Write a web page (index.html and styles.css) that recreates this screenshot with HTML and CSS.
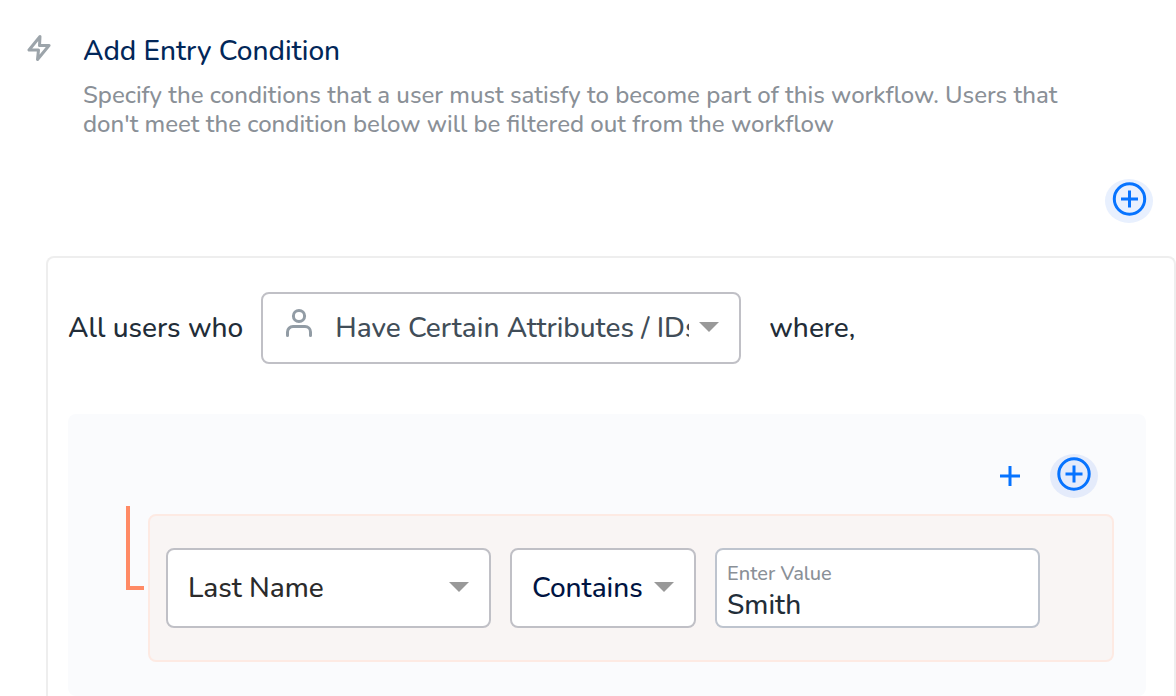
FILE: index.html
```html
<!DOCTYPE html>
<html lang="en">
<head>
<meta charset="utf-8">
<meta name="viewport" content="width=device-width, initial-scale=1">
<title>Add Entry Condition</title>
<link rel="stylesheet" href="styles.css">
</head>
<body>
<main class="page">
  <header class="intro">
    <svg class="intro-icon" viewBox="0 0 24 28" aria-hidden="true"><path d="M13 2.500 2 16h9.500l-1 9.500L22 11.500h-9.500z"/></svg>
    <div class="intro-text">
      <h1 class="title">Add Entry Condition</h1>
      <p class="description">Specify the conditions that a user must satisfy to become part of this workflow. Users that don't meet the condition below will be filtered out from the workflow</p>
    </div>
  </header>

  <div class="page-actions">
    <button class="round-button" type="button" aria-label="Add condition group">
      <svg class="round-icon" viewBox="0 0 48 44" aria-hidden="true"><circle cx="24.500" cy="20" r="15.200"/><path d="M16 20h17M24.500 11.500v17"/></svg>
    </button>
  </div>

  <section class="panel">
    <div class="audience">
      <label class="phrase" for="audience">All users who</label>
      <div class="select-box audience-box">
        <svg class="user-icon" viewBox="0 0 28 30" aria-hidden="true"><circle cx="14" cy="8" r="5.600"/><path d="M2.500 27.500v-3.500a5.500 5.500 0 0 1 5.500-5.500h12a5.500 5.500 0 0 1 5.500 5.500v3.500"/></svg>
        <select class="select audience-select" id="audience"><option>Have Certain Attributes / IDs</option></select>
        <svg class="caret" viewBox="0 0 20 10" aria-hidden="true"><path d="M0 0h20L10 10z"/></svg>
      </div>
      <span class="phrase">where,</span>
    </div>

    <div class="group">
      <div class="group-actions">
        <button class="plain-button" type="button" aria-label="Add rule">
          <svg class="plus-icon" viewBox="0 0 20 20" aria-hidden="true"><path d="M0 10h20M10 0v20"/></svg>
        </button>
        <button class="round-button tinted" type="button" aria-label="Add nested group">
          <svg class="round-icon" viewBox="0 0 48 44" aria-hidden="true"><circle cx="24" cy="20" r="15.200"/><path d="M15.500 20h17M24 11.500v17"/></svg>
        </button>
      </div>
      <div class="rule-row">
        <div class="connector"></div>
        <div class="rule">
          <div class="select-box attribute-box">
            <select class="select attribute-select" aria-label="Attribute"><option>Last Name</option></select>
            <svg class="caret" viewBox="0 0 20 10" aria-hidden="true"><path d="M0 0h20L10 10z"/></svg>
          </div>
          <div class="select-box operator-box">
            <select class="select operator-select" aria-label="Operator"><option>Contains</option></select>
            <svg class="caret" viewBox="0 0 20 10" aria-hidden="true"><path d="M0 0h20L10 10z"/></svg>
          </div>
          <div class="value-box">
            <label class="value-label" for="value">Enter Value</label>
            <input class="value-input" id="value" type="text" value="Smith">
          </div>
        </div>
      </div>
    </div>
  </section>
</main>
</body>
</html>
```
FILE: styles.css
```css
* { box-sizing: border-box; }

body {
  margin: 0;
  background: #fff;
  color: #222d38;
  font-family: Nunito, "Noto Sans", sans-serif;
  font-size: 28px;
  font-weight: 500;
}

button, select, input { font: inherit; color: inherit; margin: 0; }
button { border: 0; padding: 0; background: none; cursor: pointer; }
svg { display: block; fill: none; flex: none; }

.intro { display: flex; gap: 32px; padding: 33px 100px 0 27px; }
.intro-icon {
  width: 24px;
  height: 28px;
  margin-top: 1px;
  stroke: #9ca4aa;
  stroke-width: 3;
  stroke-linejoin: round;
}
.title {
  margin: 0 0 12px;
  color: #022759;
  font-size: 28px;
  font-weight: 500;
  line-height: 36px;
}
.description {
  margin: 0;
  color: #8a9097;
  font-size: 24px;
  line-height: 29px;
}

.page-actions { display: flex; justify-content: flex-end; padding: 40px 23px 33px; }

.round-button { width: 48px; height: 44px; border-radius: 50%; background: #e8f0fe; }
.round-button.tinted { background: #e4ebfb; }
.round-icon { width: 48px; height: 44px; stroke: #0673ff; stroke-width: 3; }
.plain-button { padding: 12px; }
.plus-icon { width: 20px; height: 20px; stroke: #0673ff; stroke-width: 3; }

.panel {
  margin-left: 46px;
  padding: 34px 28px 0 20px;
  border: 2px solid #eee;
  border-bottom: 0;
  border-radius: 8px 8px 0 0;
}
.audience { display: flex; align-items: center; margin-bottom: 50px; }
.phrase { flex: none; white-space: nowrap; }

.select-box {
  position: relative;
  border: 2px solid #c0c0c6;
  border-radius: 8px;
  background: #fff;
}
.select {
  appearance: none;
  display: block;
  width: 100%;
  height: 100%;
  border: 0;
  border-radius: 6px;
  background: transparent;
}
.caret {
  position: absolute;
  top: 50%;
  right: 20px;
  width: 20px;
  height: 10px;
  margin-top: -6px;
  fill: #999;
  pointer-events: none;
}
.audience-box { flex: 0 1 480px; height: 72px; margin: 0 28px 0 18px; }
.audience-select { padding: 0 50px 0 72px; color: #414d58; }
.user-icon {
  position: absolute;
  top: 14px;
  left: 22px;
  width: 28px;
  height: 30px;
  stroke: #929ca5;
  stroke-width: 3;
  stroke-linecap: round;
  pointer-events: none;
}

.group { padding: 40px 32px 34px 58px; border-radius: 8px; background: #fafbfd; }
.group-actions {
  display: flex;
  justify-content: flex-end;
  gap: 18px;
  margin: 0 16px 8px 0;
}
.rule-row { display: flex; gap: 4px; }
.connector {
  flex: none;
  width: 18px;
  height: 84px;
  border: solid #ff8a65;
  border-width: 0 0 4px 4px;
}
.rule {
  display: flex;
  flex: 1;
  gap: 19px;
  min-width: 0;
  margin-top: 8px;
  padding: 32px 16px;
  border: 2px solid #fdeae3;
  border-radius: 8px;
  background: #f9f5f4;
}
.attribute-box { flex: 0 1 325px; height: 80px; }
.attribute-select { padding: 0 50px 0 20px; color: #2b2b2b; }
.operator-box { flex: 0 0 186px; height: 80px; }
.operator-select { padding: 0 40px 0 20px; color: #001442; }
.value-box {
  display: flex;
  flex: 0 1 325px;
  flex-direction: column;
  height: 80px;
  min-width: 0;
  padding: 10px 10px 0;
  border: 2px solid #bec4ce;
  border-radius: 8px;
  background: #fff;
}
.value-label { color: #8a9097; font-size: 20px; line-height: 28px; }
.value-input {
  width: 100%;
  height: 34px;
  padding: 0;
  border: 0;
  background: transparent;
}
```
